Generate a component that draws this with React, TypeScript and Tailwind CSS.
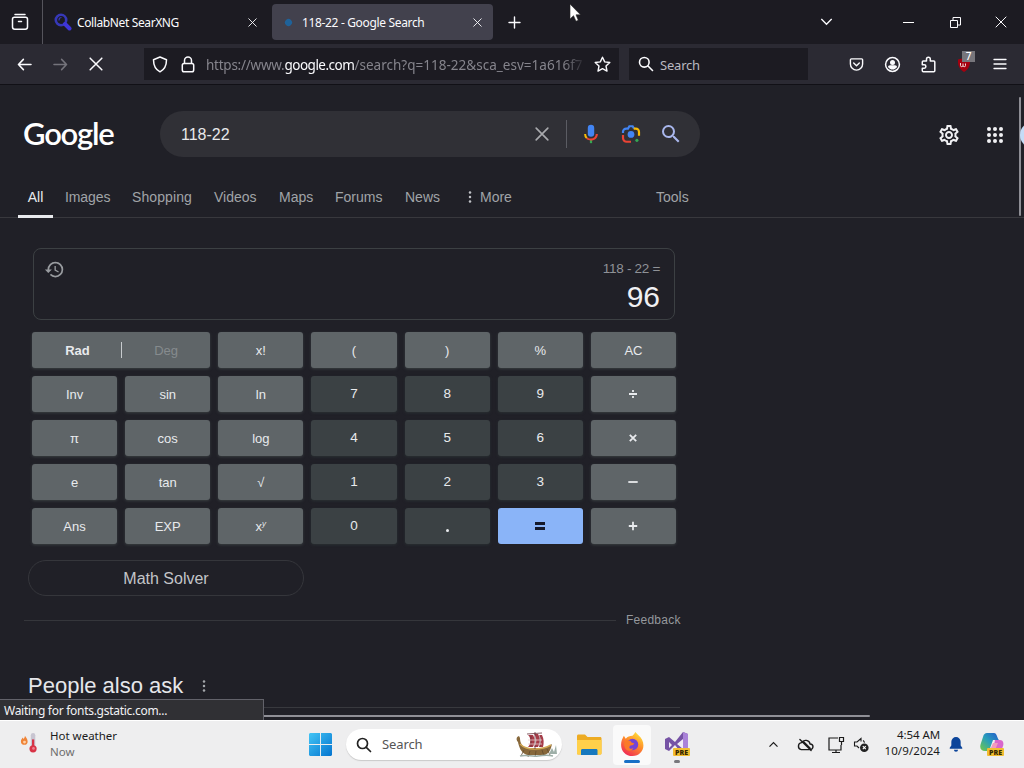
import React from "react";
import { MdHistory, MdOutlineSettings, MdSearch } from "react-icons/md";

const UI = "font-['Noto_Sans','Open_Sans',sans-serif]";

function Cross({ size, w = 1.2, className = "" }: { size: number; w?: number; className?: string }) {
  return (
    <svg width={size} height={size} viewBox="0 0 12 12" className={className} stroke="currentColor" strokeWidth={w} fill="none" strokeLinecap="round">
      <path d="M1 1l10 10M11 1L1 11" />
    </svg>
  );
}

function Slot({ className, children }: { className: string; children: React.ReactNode }) {
  return <div className={`flex shrink-0 items-center justify-center ${className}`}>{children}</div>;
}

function TabBar() {
  return (
    <div className="flex h-11 items-center bg-[#1c1b22] text-[#fbfbfe]">
      <Slot className="h-11 w-[43px] border-r border-[#55545c] pr-0.5">
        <svg width="18" height="18" viewBox="0 0 18 18" fill="none" stroke="currentColor" strokeWidth="1.5" strokeLinecap="round">
          <path d="M4 1.5h10M1.5 6.2c0-1 .8-1.9 1.9-1.9h11.2c1 0 1.9.8 1.9 1.9v7.900c0 1.200-.9 2.200-2.200 2.200H3.700c-1.200 0-2.200-1-2.200-2.200zM7.500 8.500h3" />
        </svg>
      </Slot>
      <div className="flex w-[229px] items-center pl-[11px] pr-[14px]">
        <svg width="18" height="18" viewBox="0 0 18 18" fill="none">
          <circle cx="7" cy="7" r="5.2" stroke="#3638b8" strokeWidth="2.6" />
          <path d="M5 7.5c0-2 .8-3 2.5-3" stroke="#3638b8" strokeWidth="1.2" />
          <path d="M11 11l4.5 4.5" stroke="#3f35d8" strokeWidth="4" strokeLinecap="round" />
        </svg>
        <span className="ml-[5px] grow whitespace-nowrap pt-0.5 text-[12px] tracking-[-0.38px]">CollabNet SearXNG</span>
        <Cross size={9} className="mr-px" />
      </div>
      <div className="flex h-9 w-[221px] items-center rounded bg-[#42414d] pl-[13px] pr-[11px]">
        <div className="h-[7px] w-[7px] rotate-45 rounded-sm bg-[#1f6299]" />
        <span className="ml-[10px] grow whitespace-nowrap pt-0.5 text-[12px] tracking-[-0.34px]">118-22 - Google Search</span>
        <Cross size={9} />
      </div>
      <Slot className="w-[43px]">
        <svg width="13" height="13" viewBox="0 0 13 13" stroke="currentColor" strokeWidth="1.4" strokeLinecap="round"><path d="M6.5 1v11M1 6.5h11" /></svg>
      </Slot>
      <Slot className="ml-auto mr-[60px] w-5">
        <svg width="13" height="8" viewBox="0 0 14 9" fill="none" stroke="currentColor" strokeWidth="1.5" strokeLinecap="round"><path d="M1.500 1.500L7 7l5.500-5.500" /></svg>
      </Slot>
      <Slot className="w-[25px]"><div className="h-px w-[11px] bg-white" /></Slot>
      <Slot className="ml-[24px] w-5">
        <svg width="11" height="11" viewBox="0 0 11 11" fill="none" stroke="currentColor"><path d="M.5 3.500h7v7h-7zM3 3V.5h7.500V8H8" /></svg>
      </Slot>
      <Slot className="ml-[24px] mr-[11px] w-[24px]"><Cross size={12} w={1} /></Slot>
    </div>
  );
}

function Toolbar() {
  return (
    <div className="flex h-[41px] items-center border-b border-[#111016] bg-[#2b2a33] text-[#fbfbfe]">
      <Slot className="ml-[12px] w-6">
        <svg width="15" height="13" viewBox="0 0 16 14" fill="none" stroke="currentColor" strokeWidth="1.700" strokeLinecap="round" strokeLinejoin="round"><path d="M15 7H1.500M6.800 1.500L1.500 7l5.300 5.500" /></svg>
      </Slot>
      <Slot className="ml-3 w-6 text-[#74737b]">
        <svg width="15" height="13" viewBox="0 0 16 14" fill="none" stroke="currentColor" strokeWidth="1.700" strokeLinecap="round" strokeLinejoin="round"><path d="M1 7h13.500M9.200 1.500L14.500 7l-5.300 5.500" /></svg>
      </Slot>
      <Slot className="ml-3 w-6"><Cross size={14} w={1.3} /></Slot>
      <div className="ml-[36px] flex h-8 w-[475px] items-center bg-[#1c1b22]">
        <Slot className="ml-[7px] w-[18px]">
          <svg width="16" height="17" viewBox="0 0 16 17" fill="none" stroke="currentColor" strokeWidth="1.500" strokeLinejoin="round"><path d="M8 1l6.500 2.700C14.500 9.500 12.500 13.500 8 15.800 3.500 13.500 1.500 9.500 1.500 3.700z" /></svg>
        </Slot>
        <Slot className="ml-[10px] w-[18px]">
          <svg width="14" height="17" viewBox="0 0 14 17" fill="none" stroke="currentColor" strokeWidth="1.500"><rect x="1.300" y="7.500" width="11.400" height="8.300" rx="1.800" /><path d="M3.500 7.500V4.600a3.500 3.500 0 017 0v2.900" /></svg>
        </Slot>
        <div className="ml-[9px] w-[380px] whitespace-nowrap pt-0.5 text-[13.500px] text-[#85848c] [mask-image:linear-gradient(to_right,black_94%,transparent)]">
          <span className="tracking-[-0.25px]">https://www.</span><span className="tracking-[-0.5px] text-[#fbfbfe]">google.com</span><span className="tracking-[0.02px]">/search?q=118-22&amp;sca_esv=1a616f7</span>
        </div>
        <Slot className="ml-[7px] w-[18px]">
          <svg width="17" height="17" viewBox="0 0 17 17" fill="none" stroke="currentColor" strokeWidth="1.400" strokeLinejoin="round"><path d="M8.500 1.200l2.200 4.700 5.100.6-3.800 3.500 1 5.100-4.500-2.500L4 15.100l1-5.100L1.200 6.500l5.100-.6z" /></svg>
        </Slot>
      </div>
      <div className="ml-[10px] flex h-8 w-[179px] items-center bg-[#1c1b22] pl-[9px]">
        <svg width="16" height="16" viewBox="0 0 16 16" fill="none" stroke="currentColor" strokeWidth="1.600" strokeLinecap="round"><circle cx="6.300" cy="6.300" r="4.800" /><path d="M10 10l4.500 4.500" /></svg>
        <span className="ml-[6px] pt-[3px] text-[13px] tracking-[-0.2px] text-[#bab9c0]">Search</span>
      </div>
      <Slot className="ml-[36px] w-6">
        <svg width="15" height="15" viewBox="0 0 16 16" fill="none" stroke="currentColor" strokeWidth="1.500" strokeLinecap="round" strokeLinejoin="round"><path d="M2.500 2h11c.6 0 1 .4 1 1v4.500a6.500 6.500 0 01-13 0V3c0-.6.4-1 1-1zM5 6.500l3 2.800 3-2.800" /></svg>
      </Slot>
      <Slot className="ml-3 w-6 pt-px">
        <svg width="17" height="17" viewBox="0 0 17 17"><circle cx="8.500" cy="8.500" r="6.900" fill="none" stroke="currentColor" strokeWidth="1.500" /><circle cx="8.500" cy="6.400" r="2.500" fill="currentColor" /><path d="M4 11c0-1 .9-1.700 2-1.700h5c1.100 0 2 .7 2 1.700-1 1.500-2.500 2.600-4.500 2.600S5 12.500 4 11z" fill="currentColor" /></svg>
      </Slot>
      <Slot className="ml-3 w-6">
        <svg width="17" height="17" viewBox="0 0 17 17" fill="none" stroke="currentColor" strokeWidth="1.500" strokeLinejoin="round"><path d="M6.500 5V3.200a1.900 1.900 0 013.800 0V5h3.500c.6 0 1 .4 1 1v8.700c0 .6-.4 1-1 1H3.300c-.6 0-1-.4-1-1v-2.500h1.900a1.700 1.700 0 000-3.400H2.300V6c0-.6.4-1 1-1z" /></svg>
      </Slot>
      <Slot className="relative ml-3 w-6">
        <svg width="16" height="17" viewBox="0 0 16 17"><path d="M8 2l6 1.500c.4 6-1.500 10-6 12.500C3.500 13.500 1.600 9.500 2 3.500z" fill="#a5000f" /><path d="M4.500 7v2.500q0 1.200 1.200 1.200t1.300-1.200V7.500M7 9.500q0 1.200 1.300 1.200t1.200-1.200V7.500" fill="none" stroke="#f4dada" strokeWidth="1" /></svg>
        <span className="absolute -top-[5px] left-[10px] flex h-[11px] w-[13px] items-center justify-center bg-[#77767c] text-[10px] font-medium leading-none text-white">7</span>
      </Slot>
      <Slot className="ml-[12px] w-6">
        <svg width="14" height="12" viewBox="0 0 14 12" stroke="currentColor" strokeWidth="1.300" strokeLinecap="round"><path d="M1 1.500h12M1 6h12M1 10.500h12" /></svg>
      </Slot>
    </div>
  );
}

function GoogleHeader() {
  return (
    <header className="flex h-[72px] items-end">
      <div className="ml-[23px] flex h-[46px] w-[137px] items-center pb-0.5">
        <span className="font-['Lato',sans-serif] text-[31px] font-semibold leading-[40px] tracking-[-1.250px] text-white">Google</span>
      </div>
      <div className="flex h-[46px] w-[540px] items-center rounded-full bg-[#303036]">
        <span className="ml-[21px] w-[351px] pt-px text-[16px] text-[#e8e8ea]">118-22</span>
        <Slot className="w-5 text-[#a9aaae]"><Cross size={14} w={1.400} /></Slot>
        <div className="ml-[14px] h-7 w-px bg-[#5b5c63]" />
        <Slot className="ml-[12px] w-6">
          <svg width="22" height="22" viewBox="0 0 24 24"><rect x="8.500" y="2" width="7" height="13" rx="3.500" fill="#4285f4" /><path d="M10.800 18.200h2.400V22h-2.400z" fill="#34a853" /><path d="M4.500 12h2.200c0 1.500.5 2.700 1.500 3.700l-1.600 1.500A7 7 0 014.500 12z" fill="#fbbc04" /><path d="M12 17c3 0 5.200-2.100 5.200-5h2.300c0 4-3.300 7.100-7.500 7.100-2 0-4-.7-5.400-1.900l1.600-1.500A5.400 5.400 0 0012 17z" fill="#ea4335" /></svg>
        </Slot>
        <Slot className="ml-4 w-6">
          <svg width="20" height="20" viewBox="0 0 22 22" fill="none" strokeWidth="2.400"><circle cx="11" cy="11.500" r="3.700" fill="#4285f4" /><path d="M2.200 10V8.500a3.500 3.500 0 013.500-3.500h2l1.500-2.500h3.600L14.300 5" stroke="#4285f4" /><path d="M14 5h2.300a3.500 3.500 0 013.500 3.500V13" stroke="#fbbc04" /><path d="M2.200 12v3.500A4 4 0 006.200 19.500H11" stroke="#ea4335" /><circle cx="17.500" cy="18" r="1.700" fill="#34a853" /></svg>
        </Slot>
        <Slot className="ml-4 w-6 text-[#a9b7ed]"><MdSearch size={24} /></Slot>
      </div>
      <Slot className="ml-[237px] h-[46px] w-6 pt-0.5 text-[#f0f0f3]"><MdOutlineSettings size={24} /></Slot>
      <Slot className="ml-[22px] h-[46px] w-6 pt-0.5 text-[#f0f0f3]">
        <svg width="18" height="18" viewBox="0 0 18 18" fill="currentColor">
          {[3, 9, 15].map((y) => [3, 9, 15].map((x) => <circle key={`${x}-${y}`} cx={x} cy={y} r="2" />))}
        </svg>
      </Slot>
    </header>
  );
}

function Dots({ color }: { color: string }) {
  return (
    <svg width="4" height="12" viewBox="0 0 4 12" fill={color}><circle cx="2" cy="1.500" r="1.250" /><circle cx="2" cy="6" r="1.250" /><circle cx="2" cy="10.500" r="1.250" /></svg>
  );
}

function Filters() {
  const item = "flex shrink-0 items-center whitespace-nowrap text-[14px]";
  return (
    <nav className="mt-[20px] flex h-[41px] border-b border-[#38383d] text-[#a0a4a8]">
      <div className={`${item} -mb-px ml-[18px] w-[35px] justify-center border-b-[3px] border-[#e8eaed] pt-0.5 text-[#e8eaed]`}>All</div>
      <div className={`${item} ml-[12px] w-[67px] tracking-[-0.1px]`}>Images</div>
      <div className={`${item} w-[82px] tracking-[0.1px]`}>Shopping</div>
      <div className={`${item} w-[65px]`}>Videos</div>
      <div className={`${item} w-[56px]`}>Maps</div>
      <div className={`${item} w-[70px]`}>Forums</div>
      <div className={`${item} w-[63px]`}>News</div>
      <div className={`${item} w-[188px] gap-2`}><Dots color="#c0c2c6" />More</div>
      <div className={item}>Tools</div>
    </nav>
  );
}

type Key = { label: React.ReactNode; kind?: "num" | "eq" };
const num = (label: React.ReactNode): Key => ({ label, kind: "num" });
const fn = (label: React.ReactNode): Key => ({ label: <span className="pt-px">{label}</span> });
const op = (d: string, c = "#e8eaed") => (
  <svg width="10" height="10" viewBox="0 0 10 10" stroke={c} strokeWidth="1.800" fill="none"><path d={d} /></svg>
);
const sym = (d: string): Key => ({ label: op(d) });
const KEYS: Key[] = [
  fn("x!"), fn("("), fn(")"), fn("%"), fn("AC"),
  fn("Inv"), fn("sin"), fn("ln"), num("7"), num("8"), num("9"), sym("M1 5h8M5 1v2M5 7v2"),
  fn("π"), fn("cos"), fn("log"), num("4"), num("5"), num("6"), sym("M1.800 1.800l6.400 6.400M8.200 1.800L1.800 8.200"),
  fn("e"), fn("tan"), fn("√"), num("1"), num("2"), num("3"), sym("M.3 5h9.400"),
  fn("Ans"), fn("EXP"), fn(<>x<sup className="top-[-5px] text-[8px] italic">y</sup></>), num("0"),
  num(<span className="mt-[9px] h-[3px] w-[3px] rounded-full bg-[#e8eaed]" />),
  { label: <svg width="10" height="10" viewBox="0 0 10 10" fill="#15192b"><path d="M0 1h10v3H0zM0 6h10v3H0z" /></svg>, kind: "eq" },
  sym("M.8 5h8.400M5 .8v8.400"),
];

function Calculator() {
  return (
    <section>
      <div className="ml-[33px] mt-[30px] flex h-[72px] w-[642px] justify-between rounded-lg border border-[#3c4043] pl-[10px] pr-[14px]">
        <MdHistory size={21} className="mt-[10px] text-[#999ca0]" />
        <div className="flex flex-col items-end pt-[11px]">
          <span className="text-[13.500px] leading-[17px] tracking-[-0.3px] text-[#8f9297]">118 - 22 =</span>
          <span className="mt-0.5 text-[30px] leading-[36px] text-[#f0f0f3]">96</span>
        </div>
      </div>
      <div className="ml-8 mt-[12px] grid w-[644px] auto-rows-[36px] grid-cols-7 gap-2 text-[13px] text-[#e8eaed]">
        <div className="col-span-2 flex items-center rounded-[3px] bg-[#5f6568] shadow-[0_1px_3px_#3a4042]">
          <span className="w-[89px] pl-0.5 pt-px text-center font-bold">Rad</span>
          <span className="h-4 w-px bg-[#c7cbce]" />
          <span className="grow pt-px text-center text-[#868b8e]">Deg</span>
        </div>
        {KEYS.map((k, i) => (
          <div
            key={i}
            className={`flex items-center justify-center rounded-[3px] ${
              k.kind === "num" ? "bg-[#3b4144] text-[13.500px] shadow-[0_1px_3px_#2a3033]" : k.kind === "eq" ? "bg-[#8ab4f8]" : "bg-[#5f6568] shadow-[0_1px_3px_#3a4042]"
            }`}
          >
            {k.label}
          </div>
        ))}
      </div>
      <div className="ml-7 mt-4 flex h-9 w-[276px] items-center justify-center rounded-full border border-[#35363b] pt-px text-[16px] text-[#c3c5c9]">Math Solver</div>
      <div className="ml-6 mt-[14px] flex h-5 items-center">
        <div className="h-px w-[592px] bg-[#35363b]" />
        <span className="ml-[10px] text-[12px] tracking-[0.25px] text-[#95989d]">Feedback</span>
      </div>
    </section>
  );
}

function Taskbar() {
  return (
    <footer className="flex h-12 items-center border-t border-white bg-[#eeeeef] text-[#1b1b1b]">
      <Slot className="ml-[20px] w-[18px] pb-1">
        <svg width="18" height="22" viewBox="0 0 20 24">
          <path d="M5.500 4c1 2 3 3.500 3 6.500A3.700 3.700 0 015 14c-2.500 0-4-1.500-4-3.800C1 8 2.500 7.500 2.700 6l1.500 1.500C5 6 5.500 5.500 5.500 4z" fill="#ef8438" /><circle cx="5" cy="11" r="1.600" fill="#ffd1a8" />
          <rect x="12" y="1" width="5" height="17" rx="2.500" fill="#c8c5d1" /><path d="M13.300 8h2.500v8h-2.500z" fill="#d83346" /><circle cx="14.500" cy="18.500" r="4" fill="#d83346" /><circle cx="15" cy="18" r="1.500" fill="#ed8090" />
        </svg>
      </Slot>
      <div className="ml-[12px] w-[257px] whitespace-nowrap pb-0.5 text-[11.500px] leading-4">
        <div>Hot weather</div>
        <div className="text-[#6d6d6d]">Now</div>
      </div>
      <Slot className="w-[26px]">
        <svg width="23" height="23" viewBox="0 0 24 24">
          <defs><linearGradient id="win" x1="0" y1="0" x2="1" y2="1"><stop offset="0" stopColor="#43c5f5" /><stop offset="1" stopColor="#0474cf" /></linearGradient></defs>
          <path d="M1 0h10.500v11.500H0V1zM12.500 0H23l1 1v10.500H12.500zM0 12.500h11.500V24H1l-1-1zM12.500 12.500H24V23l-1 1H12.500z" fill="url(#win)" />
        </svg>
      </Slot>
      <div className="ml-[13px] flex h-[31px] w-[216px] items-center rounded-full bg-white pl-[10px] shadow-[0_1px_1px_#c9c9c9]">
        <svg width="16" height="16" viewBox="0 0 16 16" fill="none" stroke="#222" strokeWidth="1.700" strokeLinecap="round"><circle cx="6.500" cy="6.500" r="5" /><path d="M10.300 10.300l4.200 4.200" /></svg>
        <span className="ml-[10px] text-[13px] tracking-[-0.1px] text-[#555]">Search</span>
        <svg className="ml-auto mr-[4px]" width="43" height="26" viewBox="0 0 43 26">
          <path d="M4 4c-3 1-3 4-1 6 1 5 3 11 9 13h18c5-2 6-7 7-11-4 3-7 4-12 4H13C7 15 5 11 5 6z" fill="#87683b" />
          <path d="M5 12c4 4 8 5 14 5s12-1 17-4" fill="none" stroke="#d3a955" strokeWidth="1.500" />
          <path d="M13 3c3 2 3 9 0 12h5c2-4 2-9 0-12zM19 2c3 3 3 10 0 13h4c2-4 2-10 0-13zM24 3c3 3 2 9 0 12h4c1-4 1-8-1-12z" fill="#a73b48" />
          <path d="M12 2l15-1M20 0v17M16 4v11M25 4v11" fill="none" stroke="#67333d" strokeWidth=".8" /><path d="M13 8h14M13 12h14" stroke="#e8c8c8" strokeWidth=".8" />
          <path d="M9 18l-3 6M15 19l-2 6M21 19l-1 6M27 18l2 6M32 17l3 6" stroke="#614b2d" strokeWidth=".8" /><path d="M34 22l3-6 2 4 2-7 1 9z" fill="#9eafa8" /><path d="M5 24c7-2 11 1 18 0s11-1 15 0" fill="none" stroke="#9eafa8" strokeWidth="1.500" />
        </svg>
      </div>
      <Slot className="ml-[13px] w-[27px]">
        <svg width="26" height="24" viewBox="0 0 26 24"><path d="M1 3c0-1 .6-1.600 1.500-1.600H9L11.500 4H24c1 0 1.500.5 1.500 1.500V20c0 1-.5 1.500-1.500 1.500H2.500C1.500 21.500 1 21 1 20z" fill="#edab22" /><path d="M1 7h24.500v13c0 1-.5 1.500-1.500 1.500H2.500C1.500 21.500 1 21 1 20z" fill="#ffd04a" /><path d="M5 22v-4.500c0-1 .6-1.500 1.500-1.500H20c1 0 1.500.5 1.500 1.500V22z" fill="#1678be" /></svg>
      </Slot>
      <div className="ml-[11px] flex h-10 w-[38px] flex-col items-center rounded bg-[#fafafa] pt-[7px]">
        <svg width="24" height="24" viewBox="0 0 25 25">
          <defs><linearGradient id="fox" x1=".8" y1="0" x2=".2" y2="1"><stop offset="0" stopColor="#ffe63c" /><stop offset=".45" stopColor="#ff8c29" /><stop offset="1" stopColor="#ee2359" /></linearGradient></defs>
          <path d="M16 0c2 3 5 4 7 8 4 8-1 17-10 17S-1 17 2 8l2-4 2 3c2-2 4-3 7-3 1-1 2-2 3-4z" fill="url(#fox)" />
          <circle cx="13" cy="13" r="6" fill="#7544d5" /><path d="M6 9c3-1 5 0 6 2l3 1c-2 3-4 1-5 3s1 3 4 2c-2 4-8 3-9-1-1-3-1-5 1-7z" fill="#fb7a28" />
        </svg>
        <div className="mt-[4px] h-[3px] w-4 rounded-full bg-[#1870c6]" />
      </div>
      <Slot className="ml-[11px] h-10 w-[30px] flex-col pt-[4px]">
        <svg width="28" height="26" viewBox="0 0 28 26">
          <path d="M2 8l4-2 6 5 8-10 5 2v19l-5 2-8-10-6 6-4-2z" fill="#7653a5" /><path d="M20 1l5 2v19l-5 2z" fill="#a982d8" /><path d="M6 11v6l3-3zM20 8v10l-6-5z" fill="#efeaf5" />
          <rect x="10" y="17" width="17" height="8" rx="1" fill="#f2bd30" /><text x="18.500" y="23.700" textAnchor="middle" fontFamily="Open Sans, sans-serif" fontSize="7" fontWeight="800" fill="#362800">PRE</text>
        </svg>
        <div className="mt-[3px] h-[3px] w-[6px] rounded-full bg-[#77777c]" />
      </Slot>
      <Slot className="ml-[71px] w-[20px]"><svg width="11" height="7" viewBox="0 0 10 7" fill="none" stroke="currentColor" strokeWidth="1.200"><path d="M1 5.700L5 1.500l4 4.200" /></svg></Slot>
      <Slot className="ml-[12px] w-[20px]">
        <svg width="17" height="14" viewBox="0 0 18 15" fill="none" stroke="currentColor" strokeWidth="1.500" strokeLinecap="round"><path d="M4.500 12.500h9.500a3 3 0 000-6A5 5 0 004.800 5 3.800 3.800 0 004.500 12.500zM3 1.500l12 12M7 4l7 7" /></svg>
      </Slot>
      <Slot className="ml-[11px] w-[20px]">
        <svg width="18" height="18" viewBox="0 0 18 18" fill="none" stroke="currentColor" strokeWidth="1.200"><path d="M11 2H2v12h12V9M5 16.500h8M9 14v2.500M12.500 1.500h4v4h-4zM14.500 5.500V9" /></svg>
      </Slot>
      <Slot className="ml-[5px] w-[20px]">
        <svg width="17" height="16" viewBox="0 0 17 16" fill="none" stroke="currentColor" strokeWidth="1.100"><path d="M6 11L4 9H1.500V5H4l4-3.500v3M10 3.500c.8.500 1.300 1.300 1.500 2.200" /><circle cx="11.300" cy="10.700" r="4.300" fill="#222" stroke="none" /><path d="M9.800 9.200l3 3m0-3l-3 3" stroke="white" /></svg>
      </Slot>
      <div className="ml-[3px] w-[66px] whitespace-nowrap pb-[3px] text-right text-[11.500px] leading-4">
        <div className="tracking-[-0.1px]">4:54 AM</div>
        <div className="tracking-[0.1px]">10/9/2024</div>
      </div>
      <Slot className="ml-[6px] w-[20px] text-[#0c459a]">
        <svg width="14" height="15" viewBox="0 0 15 16" fill="currentColor"><path d="M7.500 0A5 5 0 002.500 5v4L.8 11.500v1h13.400v-1L12.500 9V5a5 5 0 00-5-5zM5.300 13.500h4.400a2.200 2.200 0 01-4.400 0z" /></svg>
      </Slot>
      <Slot className="ml-[13px] w-[26px]">
        <svg width="24" height="25" viewBox="0 0 24 25">
          <defs><linearGradient id="cop" x1="0" y1="1" x2="1" y2="0"><stop offset="0" stopColor="#76c942" /><stop offset=".5" stopColor="#289fba" /><stop offset="1" stopColor="#2459cb" /></linearGradient></defs>
          <path d="M7 1h7c3 0 3 5 5 7h-6l-4 11H5c-4 0-6-3-4-8L3 5c.8-3 2-4 4-4z" fill="url(#cop)" /><path d="M15 8h5c3 0 4 3 3 6l-2 6-3 3h-6z" fill="#d867cb" /><path d="M13 11h5l-3 7h-5z" fill="#f29bbc" />
          <rect x="7" y="16" width="17" height="8" rx="1" fill="#f2bd30" /><text x="15.500" y="22.700" textAnchor="middle" fontFamily="Open Sans, sans-serif" fontSize="7" fontWeight="800" fill="#362800">PRE</text>
        </svg>
      </Slot>
    </footer>
  );
}

export default function App() {
  return (
    <div className="relative flex h-[768px] w-[1024px] flex-col overflow-hidden bg-[#202028]">
      <div className={UI}>
        <TabBar />
        <Toolbar />
      </div>
      <main className="relative h-[635px] overflow-hidden bg-[#202027] font-['Liberation_Sans',sans-serif]">
        <GoogleHeader />
        <Filters />
        <Calculator />
        <div className="ml-7 mt-[40px] flex h-[31px] items-center gap-[19px]">
          <h2 className="text-[22px] leading-[31px] text-[#e5e6ea]">People also ask</h2>
          <Dots color="#a4a7ab" />
        </div>
        <div className="ml-7 mt-[6px] h-px w-[652px] bg-[#38393e]" />
        <div className="absolute bottom-[3px] left-[230px] h-0.5 w-[640px] rounded-full bg-[#8f8f96]" />
        <div className="absolute left-[1019px] top-[12px] h-[119px] w-0.5 rounded-full bg-[#8f8f96]" />
        <div className="absolute left-[1020px] top-[37px] h-[26px] w-[26px] rounded-full bg-[#c5dcf7]" />
        <div className={`absolute bottom-0 left-0 flex h-[21px] w-[264px] items-center border-r border-t border-[#62626a] bg-[#303034] pl-1 pt-0.5 text-[12px] tracking-[-0.28px] text-[#f2f2f5] ${UI}`}>
          Waiting for fonts.gstatic.com...
        </div>
      </main>
      <div className={UI}>
        <Taskbar />
      </div>
      <svg className="absolute left-[569px] top-[3px]" width="12" height="19" viewBox="0 0 12 19"><path d="M1 1v15l3.500-3.300L7 18.300l2.300-1L7 11.800h4.500z" fill="#fff" stroke="#222" strokeWidth=".6" /></svg>
    </div>
  );
}
